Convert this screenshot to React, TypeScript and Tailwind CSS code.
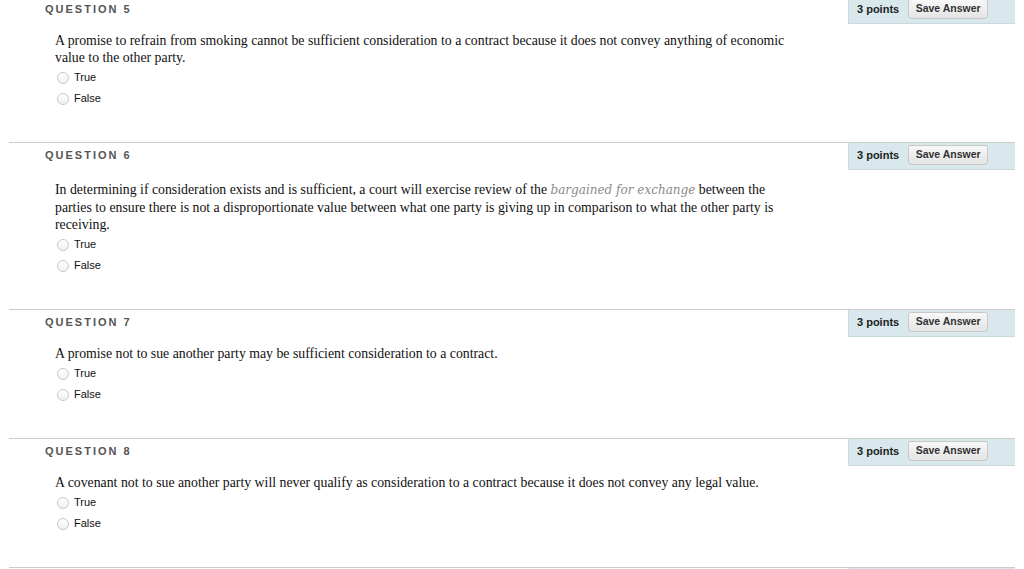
import React from "react";

interface Question {
  num: number;
  text: React.ReactNode;
  extraTop?: boolean;
}

const questions: Question[] = [
  {
    num: 5,
    text: "A promise to refrain from smoking cannot be sufficient consideration to a contract because it does not convey anything of economic value to the other party.",
  },
  {
    num: 6,
    extraTop: true,
    text: (
      <>
        In determining if consideration exists and is sufficient, a court will exercise review of the{" "}
        <em
          className="text-[#8a8a8a]"
          style={{ fontFamily: "'DejaVu Serif', 'Liberation Serif', serif", fontSize: "12px" }}
        >
          bargained for exchange
        </em>{" "}
        between the parties to ensure there is not a disproportionate value between what one party is giving up in comparison to what the other party is receiving.
      </>
    ),
  },
  {
    num: 7,
    text: "A promise not to sue another party may be sufficient consideration to a contract.",
  },
  {
    num: 8,
    text: "A covenant not to sue another party will never qualify as consideration to a contract because it does not convey any legal value.",
  },
];

function Radio({ label }: { label: string }) {
  return (
    <label className="flex h-[21px] items-center gap-[5px]">
      <span className="h-[12px] w-[12px] rounded-full border border-[#c8c8c8] bg-gradient-to-b from-white to-[#f1f1f1]" />
      <span className="text-[11px] text-[#111]">{label}</span>
    </label>
  );
}

function QuestionHeader({ num }: { num: number }) {
  return (
    <div className="flex h-[27px] items-center justify-between">
      <h3 className="pb-[2px] pl-[36px] text-[11px] font-bold tracking-[2px] text-[#555]">
        QUESTION {num}
      </h3>
      <div className="flex h-[27px] w-[167px] items-center gap-[9px] border-b border-l border-[#c9d9de] bg-[#d8e8ed] pb-[2px] pl-[8px]">
        <span className="text-[11px] font-bold text-[#222]">3 points</span>
        <button className="h-[20px] w-[80px] rounded-[3px] border border-[#c8c8c8] bg-gradient-to-b from-[#f8f8f8] to-[#e4e4e4] text-[10.5px] font-bold text-[#333]">
          Save Answer
        </button>
      </div>
    </div>
  );
}

function QuestionBlock({ q }: { q: Question }) {
  return (
    <section className="ml-[9px] w-[1006px] border-t border-[#cccccc] pb-[33px]">
      <QuestionHeader num={q.num} />
      <p
        className={`${q.extraTop ? "mt-[11px]" : "mt-2"} w-[792px] pl-[46px] text-[13.8px] leading-[17px] text-[#111]`}
        style={{ fontFamily: "'Liberation Serif', 'Times New Roman', serif" }}
      >
        {q.text}
      </p>
      <div className="mt-[1px] pl-[48px]">
        <Radio label="True" />
        <Radio label="False" />
      </div>
    </section>
  );
}

export default function App() {
  return (
    <div
      className="h-[569px] overflow-hidden bg-white"
      style={{ fontFamily: "'Liberation Sans', Arial, sans-serif" }}
    >
      <div className="-mt-[4px]">
        {questions.map((q) => (
          <QuestionBlock key={q.num} q={q} />
        ))}
        <section className="ml-[9px] flex w-[1006px] justify-end border-t border-[#cccccc]">
          <div className="h-[27px] w-[167px] border-l border-[#c9d9de] bg-[#d8e8ed]" />
        </section>
      </div>
    </div>
  );
}
